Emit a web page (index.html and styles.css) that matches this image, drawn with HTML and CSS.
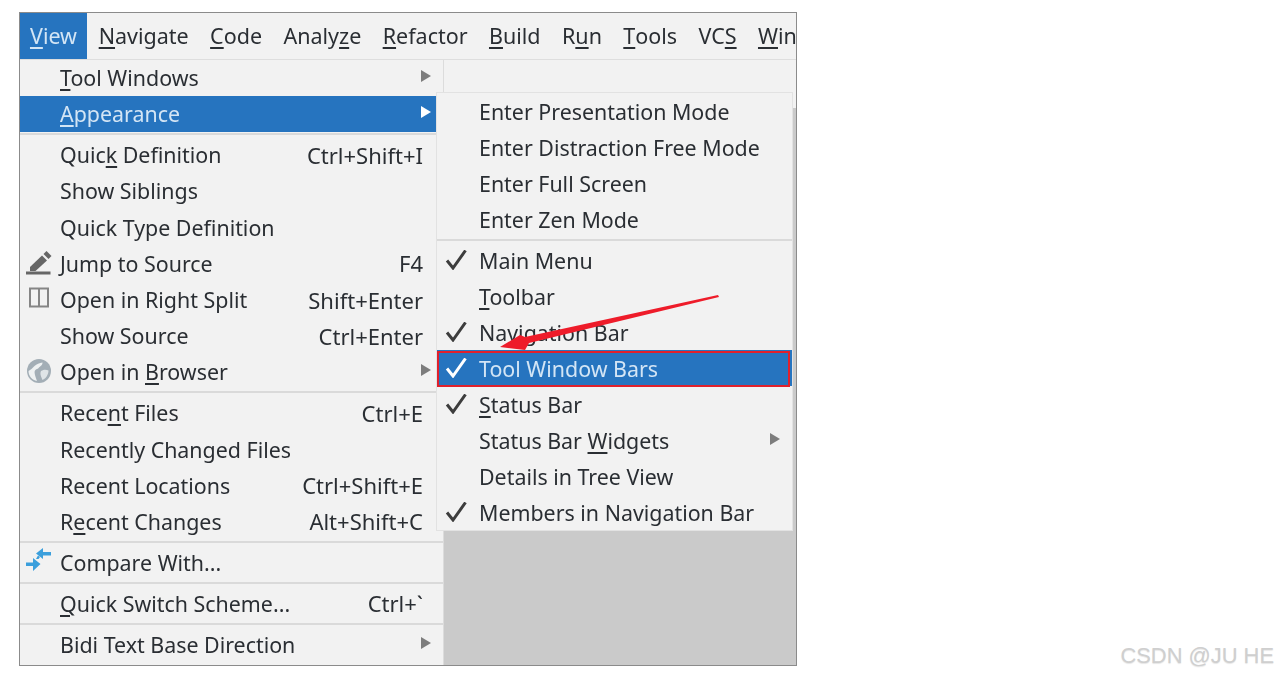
FILE: index.html
```html
<!DOCTYPE html>
<html lang="en">
<head>
<meta charset="utf-8">
<title>View menu</title>
<link rel="stylesheet" href="styles.css">
</head>
<body>
<div class="shot">
  <nav class="menubar">
    <span class="top active"><u>V</u>iew</span>
    <span class="top"><u>N</u>avigate</span>
    <span class="top"><u>C</u>ode</span>
    <span class="top">Analy<u>z</u>e</span>
    <span class="top"><u>R</u>efactor</span>
    <span class="top"><u>B</u>uild</span>
    <span class="top">R<u>u</u>n</span>
    <span class="top"><u>T</u>ools</span>
    <span class="top">VC<u>S</u></span>
    <span class="top"><u>W</u>in</span>
  </nav>
  <div class="panes">
    <div class="menu">
      <div class="row"><span class="ic"></span><span class="label"><u>T</u>ool Windows</span><span class="arrow"></span></div>
      <div class="row sel"><span class="ic"></span><span class="label"><u>A</u>ppearance</span><span class="arrow"></span></div>
      <div class="sep"></div>
      <div class="row"><span class="ic"></span><span class="label">Quic<u>k</u> Definition</span><span class="key">Ctrl+Shift+I</span><span class="slot"></span></div>
      <div class="row"><span class="ic"></span><span class="label">Show Siblings</span><span class="slot"></span></div>
      <div class="row"><span class="ic"></span><span class="label">Quick Type Definition</span><span class="slot"></span></div>
      <div class="row"><span class="ic"><svg width="26" height="26" viewBox="0 0 26 26"><path d="M4 17 16 5.500l5 5L9.500 21H4z" fill="#666"/><path d="M17.500 4l3-3 5 5-3 3z" fill="#666"/><rect x="0" y="21.500" width="24.500" height="3" fill="#666"/></svg></span><span class="label">Jump to Source</span><span class="key">F4</span><span class="slot"></span></div>
      <div class="row"><span class="ic"><svg width="26" height="26" viewBox="0 0 26 26"><rect x="4" y="1.500" width="18" height="18" fill="none" stroke="#858585" stroke-width="2"/><path d="M13 1.500v18" stroke="#858585" stroke-width="2"/></svg></span><span class="label">Open in Right Split</span><span class="key">Shift+Enter</span><span class="slot"></span></div>
      <div class="row"><span class="ic"></span><span class="label">Show Source</span><span class="key">Ctrl+Enter</span><span class="slot"></span></div>
      <div class="row"><span class="ic"><svg width="26" height="26" viewBox="0 0 26 26"><circle cx="13" cy="12" r="12" fill="#a3aeb6"/><path d="M2.500 12c2-1 4-3 6-5 2-2 5-3 8-3.500 0 3-2 3.500-3.500 5-1 1.500-3 1.500-4 3-1 1.500 0 5 2 10.500C6 21 2.500 17 2.500 12z" fill="#eef1f2"/><path d="M15 12c3-1.500 5-1.500 7.500-.5 0 4-2.500 8-6 9.500-1-3-3-6-1.500-9z" fill="#dfe4e7"/></svg></span><span class="label">Open in <u>B</u>rowser</span><span class="arrow"></span></div>
      <div class="sep"></div>
      <div class="row"><span class="ic"></span><span class="label">Rece<u>n</u>t Files</span><span class="key">Ctrl+E</span><span class="slot"></span></div>
      <div class="row"><span class="ic"></span><span class="label">Recently Changed Files</span><span class="slot"></span></div>
      <div class="row"><span class="ic"></span><span class="label">Recent Locations</span><span class="key">Ctrl+Shift+E</span><span class="slot"></span></div>
      <div class="row"><span class="ic"></span><span class="label">R<u>e</u>cent Changes</span><span class="key">Alt+Shift+C</span><span class="slot"></span></div>
      <div class="sep"></div>
      <div class="row"><span class="ic"><svg class="loose" width="26" height="26" viewBox="0 0 26 26"><g fill="#3b9fdc"><path d="M10 4.500 17-1v4h8v3.500h-8V10z"/><path d="M14.500 15 7 9v4.500H0V17h7v5z"/><path d="M10 10l2.500 0 1.500-2-2-1.500z"/></g></svg></span><span class="label">Compare With...</span><span class="slot"></span></div>
      <div class="sep"></div>
      <div class="row"><span class="ic"></span><span class="label"><u>Q</u>uick Switch Scheme...</span><span class="key">Ctrl+`</span><span class="slot"></span></div>
      <div class="sep"></div>
      <div class="row"><span class="ic"></span><span class="label">Bidi Text Base Direction</span><span class="arrow"></span></div>
    </div>
    <div class="pane"><div class="pane-top"></div></div>
  </div>

  <div class="submenu">
    <div class="row"><span class="ic"></span><span class="label">Enter Presentation Mode</span></div>
    <div class="row"><span class="ic"></span><span class="label">Enter Distraction Free Mode</span></div>
    <div class="row"><span class="ic"></span><span class="label">Enter Full Screen</span></div>
    <div class="row"><span class="ic"></span><span class="label">Enter Zen Mode</span></div>
    <div class="sep"></div>
    <div class="row"><span class="ic"><svg class="check" width="22" height="20" viewBox="0 0 22 20"><path d="M2 10.500 8 18 20.500 .5" fill="none" stroke="currentColor" stroke-width="3"/></svg></span><span class="label">Main Menu</span></div>
    <div class="row"><span class="ic"></span><span class="label"><u>T</u>oolbar</span></div>
    <div class="row"><span class="ic"><svg class="check" width="22" height="20" viewBox="0 0 22 20"><path d="M2 10.500 8 18 20.500 .5" fill="none" stroke="currentColor" stroke-width="3"/></svg></span><span class="label">Navigation Bar</span></div>
    <div class="row sel"><span class="ic"><svg class="check" width="22" height="20" viewBox="0 0 22 20"><path d="M2 10.500 8 18 20.500 .5" fill="none" stroke="currentColor" stroke-width="3"/></svg></span><span class="label">Tool Window Bars</span></div>
    <div class="row"><span class="ic"><svg class="check" width="22" height="20" viewBox="0 0 22 20"><path d="M2 10.500 8 18 20.500 .5" fill="none" stroke="currentColor" stroke-width="3"/></svg></span><span class="label"><u>S</u>tatus Bar</span></div>
    <div class="row"><span class="ic"></span><span class="label">Status Bar <u>W</u>idgets</span><span class="arrow"></span></div>
    <div class="row"><span class="ic"></span><span class="label">Details in Tree View</span></div>
    <div class="row"><span class="ic"><svg class="check" width="22" height="20" viewBox="0 0 22 20"><path d="M2 10.500 8 18 20.500 .5" fill="none" stroke="currentColor" stroke-width="3"/></svg></span><span class="label">Members in Navigation Bar</span></div>
  </div>

  <div class="redbox"></div>
  <svg class="pointer" width="240" height="70" viewBox="0 0 240 70"><polygon points="218,1 219,3 29,49 25,56 0,53 20,41 25,43" fill="#ee1c2a"/></svg>
</div>
<div class="watermark">CSDN @JU HE</div>
</body>
</html>
```
FILE: styles.css
```css
* { box-sizing: border-box; }
html, body { margin: 0; height: 100%; background: #fff; }
body { position: relative; overflow: hidden; padding: 12px 0 0 19px; font-family: "Noto Sans", "Liberation Sans", sans-serif; font-size: 21.400px; color: #2a2e33; }
u { text-decoration-thickness: 2px; text-underline-offset: 3px; }

.shot { position: relative; width: 778px; height: 654px; border: 1px solid #8b8b8b; background: #f2f2f2; overflow: hidden; filter: blur(0.45px); }

.menubar { display: flex; height: 46.500px; align-items: center; border-bottom: 1px solid #dedede; overflow: hidden; white-space: nowrap; font-size: 21.500px; }
.top { padding: 0 10.700px; height: 100%; display: flex; align-items: center; flex: none; }
.top.active { background: #2674bf; color: #d3e5f5; padding: 0 9px; width: 67px; margin-right: 1px; justify-content: center; }

.panes { display: flex; height: 606px; }
.menu { width: 424px; flex: none; border-right: 1px solid #dcdcdc; }
.pane { flex: 1; background: #cacaca; }
.pane-top { height: 48px; background: #f2f2f2; }

.row { display: flex; align-items: center; height: 36.200px; padding-right: 12px; white-space: nowrap; }
.ic { width: 40px; flex: none; display: flex; padding-left: 6px; }
.label { flex: 1; }
.key { flex: none; font-size: 22px; }
.slot { width: 8px; flex: none; }
.arrow { width: 0; height: 0; flex: none; margin: 0 0 3px -2px; border-left: 10px solid #7d7d7d; border-top: 6.500px solid transparent; border-bottom: 6.500px solid transparent; }
.loose { overflow: visible; }

.sep { height: 4.800px; display: flex; align-items: center; }
.sep::before { content: ""; display: block; width: 100%; height: 2px; background: #dadada; }

.row.sel { background: #2674bf; color: #d3e5f5; }
.row.sel .arrow { border-left-color: #fff; }

.submenu { position: absolute; left: 416px; top: 79px; width: 357px; height: 439px; background: #f2f2f2; border: 1px solid #e2e2e2; }
.submenu .row { height: 36px; padding-right: 12px; }
.submenu .sep { height: 5px; }
.submenu .ic { width: 42px; padding-left: 8px; }
.submenu .check { color: #3d3d3d; }
.submenu .sel .check { color: #fff; }

.redbox { position: absolute; left: 417px; top: 338px; width: 353px; height: 36px; border: 2px solid #e0202c; }
.pointer { position: absolute; left: 480px; top: 281px; }

.watermark { position: absolute; right: 3px; top: 643px; font-family: "Liberation Sans", sans-serif; font-size: 21.900px; color: #cfcfcf; text-shadow: 0 1px 1px #e6e6e6; }
```
